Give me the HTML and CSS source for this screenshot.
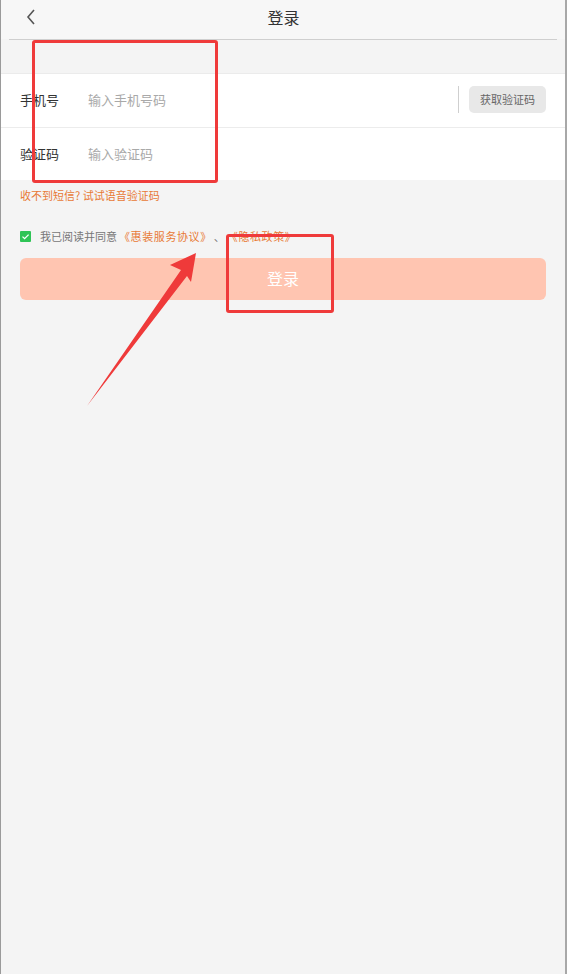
FILE: index.html
```html
<!DOCTYPE html>
<html lang="zh-CN">
<head>
<meta charset="utf-8" />
<title>登录</title>
<link rel="stylesheet" href="styles.css">
</head>
<body>
<div class="screen">
  <div class="topbar">
    <svg class="back" width="12" height="16" viewBox="0 0 12 16"><path d="M9 1 L3 8 L9 15" fill="none" stroke="#555" stroke-width="1.6"/></svg>
    <div class="title">登录</div>
  </div>
  <div class="topline"></div>
  <div class="gap"></div>

  <div class="form">
    <div class="row">
      <span class="label">手机号</span>
      <span class="ph">输入手机号码</span>
      <span class="sep"></span>
      <span class="getcode">获取验证码</span>
    </div>
    <div class="row">
      <span class="label">验证码</span>
      <span class="ph">输入验证码</span>
    </div>
  </div>

  <div class="tip">收不到短信? 试试语音验证码</div>

  <div class="agree">
    <span class="check"><svg width="11" height="11" viewBox="0 0 11 11"><path d="M2.5 5.6 L4.6 7.6 L8.6 3.6" fill="none" stroke="#fff" stroke-width="1.3"/></svg></span>
    <span class="agree-text">我已阅读并同意</span>
    <span class="link">《惠装服务协议》</span>
    <span class="dot">、</span>
    <span class="link">《隐私政策》</span>
  </div>

  <div class="login-btn">登录</div>

  <!-- annotations drawn over the screenshot -->
  <div class="mark mark-form"></div>
  <div class="mark mark-btn"></div>
  <svg class="arrow" width="567" height="974" viewBox="0 0 567 974">
    <polygon points="87,406 181,270 170,265 196,253 191,282 187,276" fill="#ef3a3a"/>
  </svg>
</div>
</body>
</html>
```

FILE: styles.css
```css
body, html{
  margin:0;
  padding:0;
  background:#f4f4f4;
  font-family:"Noto Sans CJK SC", "Noto Sans", sans-serif;
  color:#333;
}
.screen{
  position:relative;
  height:974px;
  box-sizing:border-box;
  border-left:1px solid #9a9a9a;
  border-right:2px solid #a8a8a8;
  background:#f4f4f4;
  overflow:hidden;
}
.topbar{
  height:39px;
  box-sizing:border-box;
  padding-bottom:6px;
  background:#f7f7f7;
  display:flex;
  align-items:center;
  justify-content:center;
  position:relative;
}
.back{
  position:absolute;
  left:24px;
  top:9px;
}
.title{
  font-size:16px;
  color:#333;
  margin-left:1px;
}
.topline{
  margin:0 8px;
  border-bottom:1px solid #cfcfcf;
}
.gap{
  height:33px;
}
.form{
  background:#fff;
  border-top:1px solid #ebebeb;
}
.row{
  height:53px;
  box-sizing:border-box;
  display:flex;
  align-items:center;
  padding:0 19px 2px 19px;
  font-size:13px;
}
.row + .row{
  height:53px;
  border-top:1px solid #ececec;
}
.label{
  width:68px;
  color:#333;
}
.ph{
  color:#a9a9a9;
  flex:1;
}
.sep{
  width:1px;
  height:27px;
  background:#cfcfcf;
  margin-right:10px;
}
.getcode{
  width:77px;
  height:27px;
  line-height:27px;
  text-align:center;
  background:#e8e8e8;
  border-radius:5px;
  font-size:11px;
  color:#666;
}
.tip{
  font-size:11px;
  color:#e87a36;
  padding:7px 19px 0;
}
.agree{
  display:flex;
  align-items:center;
  padding:25px 19px 0;
  font-size:11px;
  color:#777;
}
.check{
  width:11px;
  height:11px;
  background:#2fc456;
  border-radius:1px;
  margin-right:9px;
  display:flex;
}
.link{
  color:#e87a36;
  letter-spacing:0.6px;
}
.dot{
  color:#777;
  margin:0 2px 0 2px;
}
.agree-text{
  margin-right:2px;
}
.login-btn{
  margin:14px 19px 0;
  height:42px;
  line-height:40px;
  text-align:center;
  background:#ffc5b1;
  border-radius:6px;
  color:#fff;
  font-size:16px;
}
.mark{
  position:absolute;
  border:3px solid #ef3a3a;
  border-radius:3px;
}
.mark-form{
  left:31px;
  top:40px;
  width:180px;
  height:137px;
}
.mark-btn{
  left:225px;
  top:234px;
  width:102px;
  height:73px;
}
.arrow{
  position:absolute;
  left:-1px;
  top:0;
}
```
